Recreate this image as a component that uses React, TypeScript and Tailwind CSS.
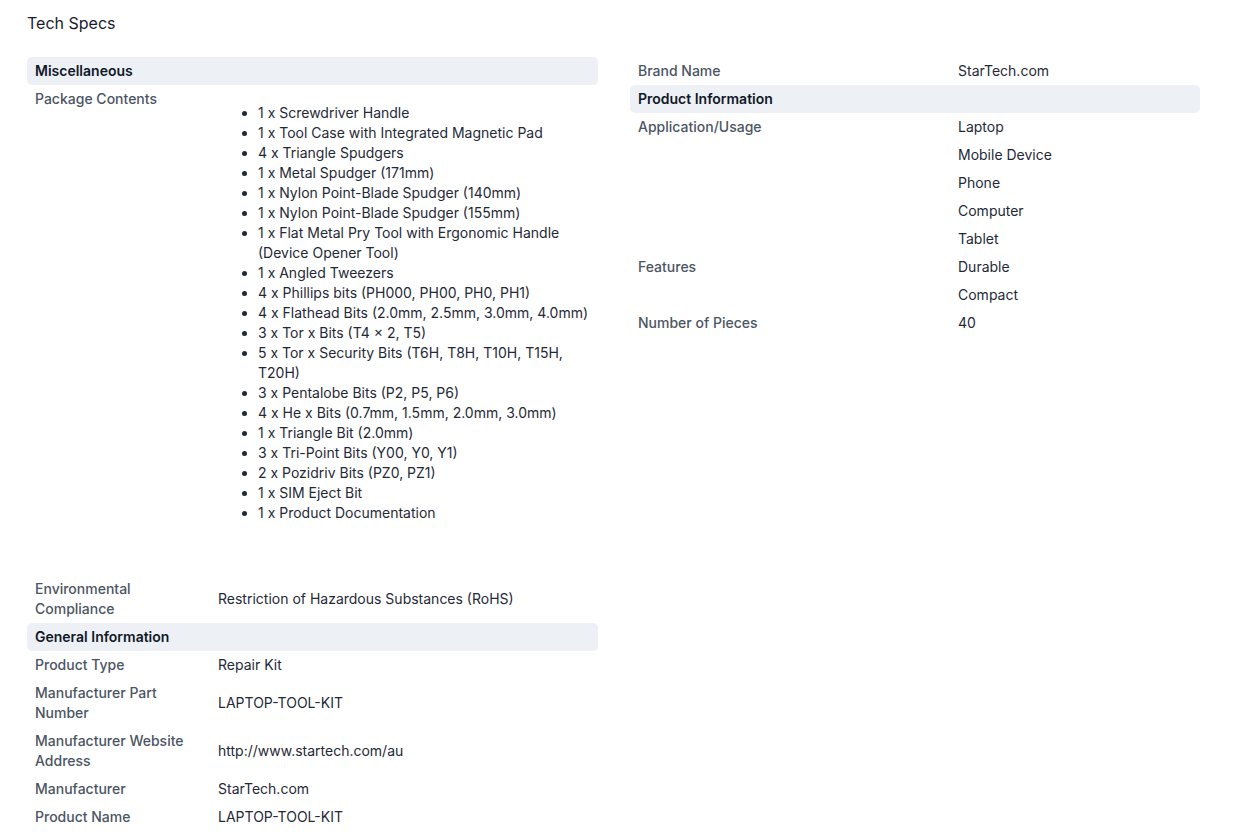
import React from "react";

const packageContents = [
  "1 x Screwdriver Handle",
  "1 x Tool Case with Integrated Magnetic Pad",
  "4 x Triangle Spudgers",
  "1 x Metal Spudger (171mm)",
  "1 x Nylon Point-Blade Spudger (140mm)",
  "1 x Nylon Point-Blade Spudger (155mm)",
  "1 x Flat Metal Pry Tool with Ergonomic Handle (Device Opener Tool)",
  "1 x Angled Tweezers",
  "4 x Phillips bits (PH000, PH00, PH0, PH1)",
  "4 x Flathead Bits (2.0mm, 2.5mm, 3.0mm, 4.0mm)",
  "3 x Tor x Bits (T4 × 2, T5)",
  "5 x Tor x Security Bits (T6H, T8H, T10H, T15H, T20H)",
  "3 x Pentalobe Bits (P2, P5, P6)",
  "4 x He x Bits (0.7mm, 1.5mm, 2.0mm, 3.0mm)",
  "1 x Triangle Bit (2.0mm)",
  "3 x Tri-Point Bits (Y00, Y0, Y1)",
  "2 x Pozidriv Bits (PZ0, PZ1)",
  "1 x SIM Eject Bit",
  "1 x Product Documentation",
];

function SectionHeader({ title }: { title: string }) {
  return (
    <div className="col-span-2 rounded-[5px] bg-[#edf0f5] px-2 py-1 font-semibold text-[#111827]">
      {title}
    </div>
  );
}

function Row({ label, children }: { label: string; children: React.ReactNode }) {
  return (
    <>
      <div className="px-2 py-1 font-medium text-[#4b5563]">{label}</div>
      <div className="self-center px-2 py-1 text-[#1f2937]">{children}</div>
    </>
  );
}

function MultiRow({ label, values }: { label: string; values: string[] }) {
  return (
    <>
      <div className="px-2 py-1 font-medium text-[#4b5563]">{label}</div>
      <div className="flex flex-col text-[#1f2937]">
        {values.map((v) => (
          <div key={v} className="px-2 py-1">
            {v}
          </div>
        ))}
      </div>
    </>
  );
}

export default function App() {
  return (
    <div
      className="min-h-screen bg-white pl-[27px] pt-[11px] text-sm leading-5"
      style={{ fontFamily: "Inter, 'Noto Sans', sans-serif" }}
    >
      <h2 className="text-base leading-6 text-[#1a1a2e]">Tech Specs</h2>
      <div className="mt-[22px] flex gap-8">
        <div className="grid w-[571px] grid-cols-[183px_1fr] content-start">
          <SectionHeader title="Miscellaneous" />
          <div className="px-2 py-1 font-medium text-[#4b5563]">Package Contents</div>
          <div className="px-2 pb-[52px] pt-[18px] text-[#1f2937]">
            <ul className="list-disc pl-10">
              {packageContents.map((item) => (
                <li key={item}>{item}</li>
              ))}
            </ul>
          </div>
          <Row label="Environmental Compliance">Restriction of Hazardous Substances (RoHS)</Row>
          <SectionHeader title="General Information" />
          <Row label="Product Type">Repair Kit</Row>
          <Row label="Manufacturer Part Number">LAPTOP-TOOL-KIT</Row>
          <Row label="Manufacturer Website Address">http://www.startech.com/au</Row>
          <Row label="Manufacturer">StarTech.com</Row>
          <Row label="Product Name">LAPTOP-TOOL-KIT</Row>
        </div>
        <div className="grid w-[570px] grid-cols-[320px_1fr] content-start">
          <Row label="Brand Name">StarTech.com</Row>
          <SectionHeader title="Product Information" />
          <MultiRow
            label="Application/Usage"
            values={["Laptop", "Mobile Device", "Phone", "Computer", "Tablet"]}
          />
          <MultiRow label="Features" values={["Durable", "Compact"]} />
          <Row label="Number of Pieces">40</Row>
        </div>
      </div>
    </div>
  );
}
